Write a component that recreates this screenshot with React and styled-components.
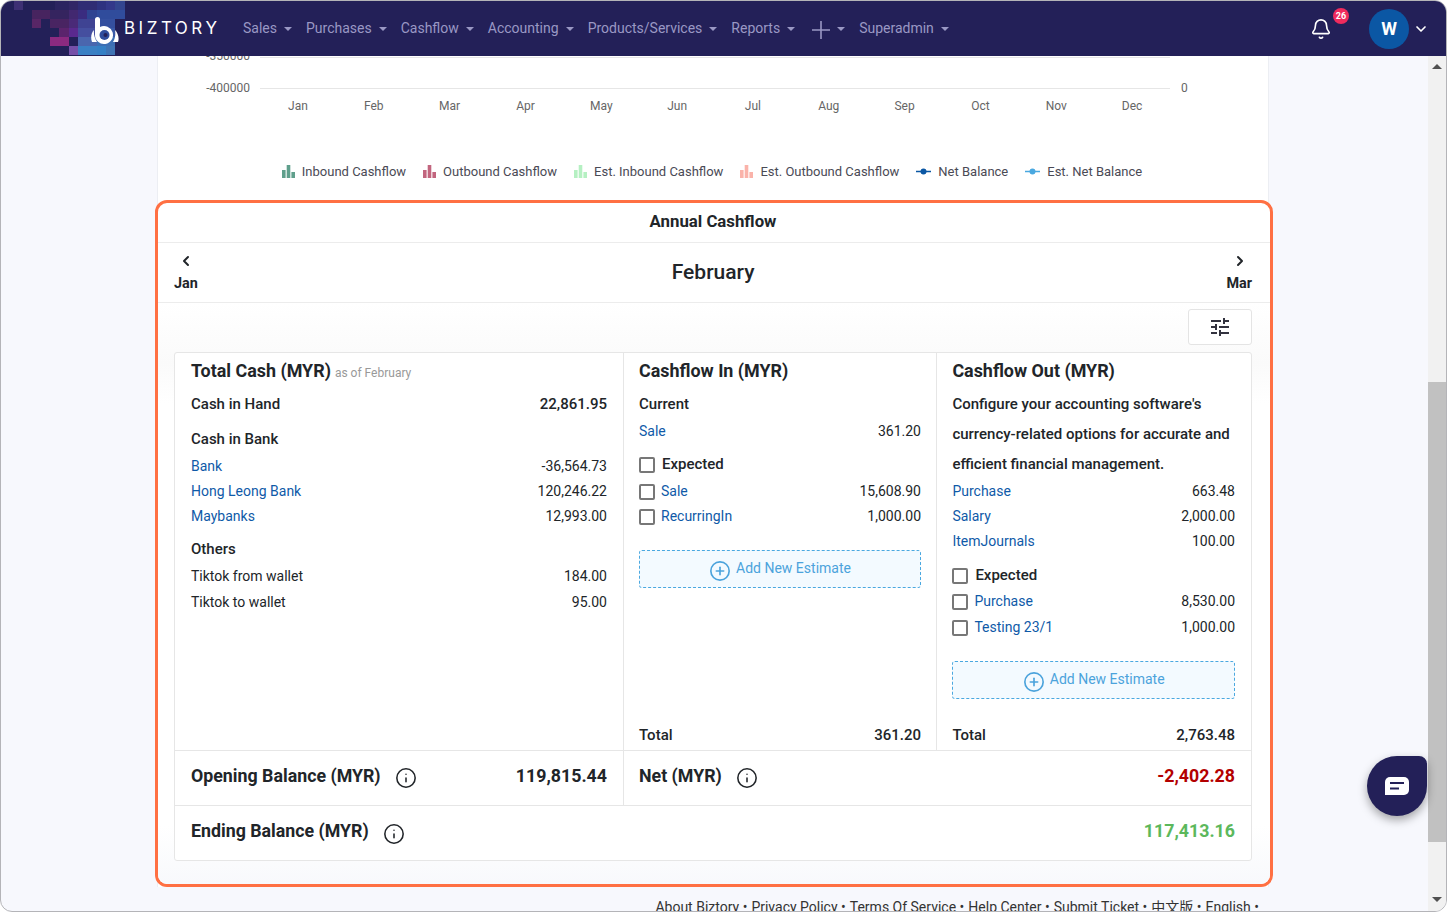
import styled, { createGlobalStyle } from 'styled-components';
import { Bell, ChevronDown, ChevronLeft, ChevronRight, CirclePlus, Info } from 'lucide-react';
import { MdTune } from 'react-icons/md';

const GlobalStyle = createGlobalStyle`
	html, body {
		margin: 0;
		height: 100%;
		overflow: hidden;
		background: #fff;
		font-family: 'Roboto', 'Noto Sans CJK SC', sans-serif;
		font-size: 14px;
		color: #212529;
	}
	* { box-sizing: border-box; }
`;

const NAV_ITEMS = ['Sales', 'Purchases', 'Cashflow', 'Accounting', 'Products/Services', 'Reports'];
const MONTHS = ['Jan', 'Feb', 'Mar', 'Apr', 'May', 'Jun', 'Jul', 'Aug', 'Sep', 'Oct', 'Nov', 'Dec'];
const FOOTER = ['About Biztory', 'Privacy Policy', 'Terms Of Service', 'Help Center', 'Submit Ticket', '中文版', 'English'];

// x, y, width, colour of the mosaic behind the logo
const MOSAIC = [
	[14, 1, 9, '#3e3074'], [55, 1, 14, '#2b2460'], [69, 1, 9, '#312766'], [78, 1, 19, '#2f2c74'], [97, 1, 9, '#2e3280'], [106, 1, 9, '#33388a'], [115, 1, 10, '#33458f'],
	[32, 10, 18, '#47245f'], [50, 10, 19, '#35245f'], [69, 10, 9, '#422870'], [78, 10, 9, '#3a2c80'], [87, 10, 10, '#2f4492'], [97, 10, 28, '#304c9c'],
	[32, 19, 9, '#582666'], [50, 19, 19, '#492462'], [69, 19, 9, '#4a2a78'], [78, 19, 19, '#3f4393'], [97, 19, 18, '#35509f'],
	[59, 28, 10, '#5b246c'], [69, 28, 9, '#5a298e'], [78, 28, 19, '#454f9f'], [97, 28, 18, '#3b5ba8'],
	[50, 37, 19, '#8c2a80'], [78, 37, 19, '#4a66ae'], [97, 37, 18, '#3d6fb4'],
	[69, 46, 9, '#7550a8'], [78, 46, 19, '#3a80c4'], [97, 46, 9, '#3580c5'], [106, 46, 9, '#3f74b4'],
];

const LEGEND = [
	{ label: 'Inbound Cashflow', type: 'bar', color: '#5f9f8c' },
	{ label: 'Outbound Cashflow', type: 'bar', color: '#c2657e' },
	{ label: 'Est. Inbound Cashflow', type: 'bar', color: '#b5f0c2' },
	{ label: 'Est. Outbound Cashflow', type: 'bar', color: '#fab3aa' },
	{ label: 'Net Balance', type: 'line', color: '#0b57a4' },
	{ label: 'Est. Net Balance', type: 'line', color: '#4aa8e0' },
];

const Frame = styled.div`
	position: relative;
	width: 1447px;
	height: 912px;
	border: 1px solid #b4b4b8;
	border-radius: 12px;
	overflow: hidden;
	display: flex;
	flex-direction: column;
	background: #f7f8fd;
`;

const Nav = styled.header`
	position: relative;
	flex: none;
	height: 55px;
	background: #232058;
	display: flex;
	align-items: center;
	padding-left: 90px;
`;

const Mosaic = styled.svg`
	position: absolute;
	left: -1px;
	top: -1px;
`;

const Logo = styled.div`
	position: relative;
	display: flex;
	align-items: center;
	width: 152px;
	color: #fff;
	font-family: 'Inter', sans-serif;
	font-size: 17px;
	letter-spacing: 3.5px;
`;

const LogoText = styled.span`
	margin-top: -2px;
`;

const Menu = styled.nav`
	display: flex;
	align-items: center;
	gap: 14px;
	padding-bottom: 1px;
`;

const MenuItem = styled.div`
	display: flex;
	align-items: center;
	gap: 7px;
	color: #9a98c4;
	font-size: 14px;
	margin-left: ${(p) => p.$ml || 0}px;
`;

const Caret = styled.span`
	width: 0;
	height: 0;
	border-left: 4px solid transparent;
	border-right: 4px solid transparent;
	border-top: 4px solid #9a98c4;
	margin-top: 2px;
`;

const NavRight = styled.div`
	margin-left: auto;
	display: flex;
	align-items: center;
	padding-right: 17px;
`;

const BellWrap = styled.div`
	position: relative;
	display: flex;
	margin-right: 37px;
`;

const Badge = styled.span`
	position: absolute;
	left: 23px;
	top: -10px;
	width: 16px;
	height: 16px;
	border-radius: 50%;
	background: #ef2b5d;
	color: #fff;
	font-size: 9px;
	font-weight: 700;
	display: flex;
	align-items: center;
	justify-content: center;
`;

const Avatar = styled.div`
	width: 40px;
	height: 40px;
	border-radius: 50%;
	background: #0b57a4;
	color: #fff;
	font-size: 18px;
	font-weight: 700;
	display: flex;
	align-items: center;
	justify-content: center;
	margin-right: 4px;
`;

const Viewport = styled.div`
	flex: 1;
	min-height: 0;
	display: flex;
`;

const Main = styled.main`
	flex: 1;
	min-width: 0;
	overflow: hidden;
`;

const Sheet = styled.div`
	width: 1112px;
	margin-left: 156px;
	background: #fff;
	border-left: 1px solid #eceef3;
	border-right: 1px solid #eceef3;
`;

const ChartSvg = styled.svg`
	display: block;
	font-family: 'Roboto', sans-serif;
	font-size: 12px;
	fill: #666;
`;

const Legend = styled.div`
	height: 59px;
	display: flex;
	align-items: center;
	justify-content: center;
	gap: 17px;
	padding: 2px 2px 0 0;
`;

const LegendItem = styled.div`
	display: flex;
	align-items: center;
	gap: 7px;
	font-size: 13px;
	color: #4a4a55;
`;

const Highlight = styled.section`
	margin: 0 -5px 0 -3px;
	border: 3px solid #ff7043;
	border-radius: 12px;
	background: #fff;
	overflow: hidden;
`;

const TitleBar = styled.h2`
	margin: 0;
	height: 40px;
	border-bottom: 1px solid #ececec;
	display: flex;
	align-items: center;
	justify-content: center;
	padding-bottom: 3px;
	padding-right: 2px;
	font-size: 16.8px;
	font-weight: 700;
`;

const MonthBar = styled.div`
	height: 60px;
	border-bottom: 1px solid #ececec;
	display: flex;
	align-items: center;
	justify-content: space-between;
	padding: 0 18px 0 16px;
`;

const MonthLink = styled.div`
	display: flex;
	flex-direction: column;
	align-items: center;
	font-size: 14.4px;
	font-weight: 700;
	line-height: 22px;
	gap: 4px;
	padding-top: 2px;

	svg {
		display: block;
		margin-left: ${(p) => (p.$next ? 2 : 0)}px;
	}
`;

const MonthName = styled.div`
	font-size: 21px;
	font-weight: 500;
	padding: 0 0 2px 2px;
`;

const Content = styled.div`
	padding: 6px 18px 23px 16px;
	background: linear-gradient(#fff, #fafafa 60px, #fff 100px, #fff 90%, #f8f9fc);
`;

const Toolbar = styled.div`
	display: flex;
	justify-content: flex-end;
	margin-bottom: 7px;
`;

const FilterButton = styled.button`
	width: 64px;
	height: 36px;
	padding: 0;
	border: 1px solid #e4e4e4;
	border-radius: 3px;
	background: #fff;
	color: #33333f;
	display: flex;
	align-items: center;
	justify-content: center;
`;

const Card = styled.div`
	background: #fff;
	border: 1px solid #e6e6e6;
	border-radius: 3px;
	height: 509px;
`;

const Columns = styled.div`
	display: grid;
	grid-template-columns: 449px 313px 1fr;
	height: 398px;
	border-bottom: 1px solid #e6e6e6;
`;

const Column = styled.div`
	display: flex;
	flex-direction: column;
	padding: ${(p) => p.$pad || '0 15px'};
	border-right: ${(p) => (p.$last ? 'none' : '1px solid #e6e6e6')};
`;

const ColumnTitle = styled.div`
	height: 38px;
	flex: none;
	display: flex;
	align-items: center;
	gap: 4px;
	padding-bottom: 3px;
	font-size: 17.9px;
	font-weight: 700;
`;

const AsOf = styled.span`
	font-size: 12px;
	font-weight: 400;
	color: #999;
	padding-top: 4px;
`;

const Row = styled.div`
	flex: none;
	height: ${(p) => p.$h || 25}px;
	margin-top: ${(p) => p.$mt || 0}px;
	padding-bottom: ${(p) => (p.$h ? 0 : 1)}px;
	display: flex;
	align-items: center;
	justify-content: space-between;
	font-size: ${(p) => (p.$strong ? 15 : 14)}px;
	font-weight: ${(p) => (p.$strong ? 500 : 400)};
`;

const RowLabel = styled.div`
	display: flex;
	align-items: center;
	gap: ${(p) => (p.$strong ? 7 : 6)}px;
`;

const RowLink = styled.span`
	color: #0f5aa8;
`;

const Checkbox = styled.span`
	width: 16px;
	height: 16px;
	border: 2px solid #777;
	border-radius: 2px;
	background: #fff;
	margin-top: 2px;
`;

const Intro = styled.p`
	margin: -2px 0 0;
	line-height: 30px;
	font-size: 15px;
	font-weight: 500;
`;

const AddEstimate = styled.button`
	flex: none;
	width: 100%;
	height: 38px;
	margin-top: 21px;
	border: 1px dashed #4aa8e0;
	border-radius: 3px;
	background: #f3faff;
	color: #4ba3dc;
	font-family: inherit;
	font-size: 14px;
	display: flex;
	align-items: center;
	justify-content: center;
	gap: 5px;
	padding: 0;

	svg { margin-top: 3px; }
	span { margin-top: -2px; }
`;

const TotalRow = styled(Row)`
	margin-top: auto;
	height: 26px;
	margin-bottom: 2px;
	padding-bottom: 0;
`;

const BalanceRow = styled.div`
	display: grid;
	grid-template-columns: 449px 1fr;
	height: 55px;
	border-bottom: 1px solid #e6e6e6;
`;

const EndingRow = styled.div`
	height: 54px;
	display: flex;
	align-items: center;
	justify-content: space-between;
	padding: 0 16px 5px;
	font-size: 17.8px;
	font-weight: 700;
`;

const BalanceCell = styled.div`
	display: flex;
	align-items: center;
	justify-content: space-between;
	padding: ${(p) => (p.$divider ? '0 16px 6px' : '0 16px 6px 15px')};
	font-size: 17.8px;
	font-weight: 700;
	border-right: ${(p) => (p.$divider ? '1px solid #e6e6e6' : 'none')};
`;

const BalanceLabel = styled.div`
	display: flex;
	align-items: center;
	gap: 14px;

	svg { margin-top: 6px; }
`;

const Amount = styled.span`
	color: ${(p) => p.$color || 'inherit'};
`;

const Footer = styled.footer`
	width: 1268px;
	display: flex;
	justify-content: flex-end;
	gap: 4px;
	padding: 12px 10px 0 0;
	font-size: 14px;
	line-height: 17px;
	color: #333;
	white-space: nowrap;
`;

const Scrollbar = styled.div`
	flex: none;
	width: 18px;
	background: #f1f1f1;
	display: flex;
	flex-direction: column;
	align-items: center;
`;

const ScrollArrow = styled.span`
	flex: none;
	width: 0;
	height: 0;
	border-left: 5px solid transparent;
	border-right: 5px solid transparent;
	margin-top: ${(p) => p.$mt}px;
	${(p) => (p.$down ? 'border-top: 5px solid #505050;' : 'border-bottom: 5px solid #505050;')}
`;

const ScrollThumb = styled.div`
	flex: none;
	width: 100%;
	height: 460px;
	margin-top: 313px;
	background: #c1c1c1;
`;

const ChatButton = styled.button`
	position: absolute;
	right: 19px;
	bottom: 95px;
	width: 60px;
	height: 60px;
	padding: 0;
	border: none;
	border-radius: 50% 8px 50% 50%;
	background: #232058;
	box-shadow: 0 4px 10px rgba(0, 0, 0, 0.35);
	display: flex;
	align-items: center;
	justify-content: center;
`;

const LogoMark = () => (
	<svg width="30" height="28" viewBox="0 0 30 28" style={{ marginRight: 3, marginTop: 5 }} aria-hidden>
		<path d="M4 2.500a2.500 2.500 0 0 1 5 0V10a9 9 0 1 1-5 8z" fill="#fff" />
		<circle cx="13.500" cy="18" r="5" fill="#2f4c9c" />
		<circle cx="14.500" cy="18" r="2" fill="#232058" />
		<path d="M3 13C0 16-.5 21 1 25h5C3.500 21 2.500 17 3 13zM24 13c3 3 4.500 8 3 12h-5c2.500-4 2.500-8 2-12z" fill="#fff" />
	</svg>
);

const PlusIcon = () => (
	<svg width="18" height="18" viewBox="0 0 18 18" style={{ marginTop: 3 }} aria-hidden>
		<path d="M9 0v18M0 9h18" stroke="#9a98c4" strokeWidth="1.6" />
	</svg>
);

const BarIcon = ({ color }) => (
	<svg width="13" height="13" viewBox="0 0 13 13" aria-hidden>
		<g fill={color}>
			<rect x="0" y="5" width="3.600" height="8" />
			<rect x="4.700" y="0" width="3.600" height="13" />
			<rect x="9.400" y="7" width="3.600" height="6" />
		</g>
	</svg>
);

const LineIcon = ({ color }) => (
	<svg width="15" height="13" viewBox="0 0 15 13" aria-hidden>
		<path d="M0 6.500h15" stroke={color} strokeWidth="1.500" />
		<circle cx="7.500" cy="6.500" r="3" fill={color} />
	</svg>
);

const MainChart = () => (
	<ChartSvg width="1110" height="85" viewBox="158 56 1110 85" role="img" aria-label="Cashflow chart">
		<path d="M260 57.500H1170M260 88.500H1170" stroke="#e6e6e6" strokeWidth="1" />
		<text x="250" y="60" textAnchor="end">-350000</text>
		<text x="250" y="92" textAnchor="end">-400000</text>
		<text x="1181" y="92">0</text>
		{MONTHS.map((m, i) => (
			<text key={m} x={298 + i * 75.82} y="110" textAnchor="middle">{m}</text>
		))}
	</ChartSvg>
);

const Expected = ({ label, value, ...rest }) => (
	<Row {...rest}>
		<RowLabel>
			<Checkbox />
			<RowLink>{label}</RowLink>
		</RowLabel>
		<span>{value}</span>
	</Row>
);

const LinkRow = ({ label, value, ...rest }) => (
	<Row {...rest}>
		<RowLink>{label}</RowLink>
		<span>{value}</span>
	</Row>
);

const ExpectedHead = ({ ...rest }) => (
	<Row $strong {...rest}>
		<RowLabel $strong>
			<Checkbox />
			Expected
		</RowLabel>
	</Row>
);

const AddButton = () => (
	<AddEstimate>
		<CirclePlus size={22} strokeWidth={1.8} />
		<span>Add New Estimate</span>
	</AddEstimate>
);

const InfoIcon = () => <Info size={22} strokeWidth={1.7} />;

export default function App() {
	return (
		<>
			<GlobalStyle />
			<Frame>
				<Nav>
					<Mosaic width="130" height="56" aria-hidden>
						{MOSAIC.map(([x, y, w, c]) => (
							<rect key={`${x}-${y}`} x={x} y={y} width={w} height="9" fill={c} />
						))}
					</Mosaic>
					<Logo>
						<LogoMark />
						<LogoText>BIZTORY</LogoText>
					</Logo>
					<Menu>
						{NAV_ITEMS.map((item) => (
							<MenuItem key={item}>
								{item}
								<Caret />
							</MenuItem>
						))}
						<MenuItem $ml={3}>
							<PlusIcon />
							<Caret />
						</MenuItem>
						<MenuItem>
							Superadmin
							<Caret />
						</MenuItem>
					</Menu>
					<NavRight>
						<BellWrap>
							<Bell size={22} color="#fff" strokeWidth={1.8} />
							<Badge>26</Badge>
						</BellWrap>
						<Avatar>W</Avatar>
						<ChevronDown size={16} color="#fff" strokeWidth={2.5} />
					</NavRight>
				</Nav>
				<Viewport>
					<Main>
						<Sheet>
							<MainChart />
							<Legend>
								{LEGEND.map((l) => (
									<LegendItem key={l.label}>
										{l.type === 'bar' ? <BarIcon color={l.color} /> : <LineIcon color={l.color} />}
										{l.label}
									</LegendItem>
								))}
							</Legend>
							<Highlight>
								<TitleBar>Annual Cashflow</TitleBar>
								<MonthBar>
									<MonthLink>
										<ChevronLeft size={16} strokeWidth={3} />
										Jan
									</MonthLink>
									<MonthName>February</MonthName>
									<MonthLink $next>
										<ChevronRight size={16} strokeWidth={3} />
										Mar
									</MonthLink>
								</MonthBar>
								<Content>
									<Toolbar>
										<FilterButton aria-label="Filter">
											<MdTune size={24} />
										</FilterButton>
									</Toolbar>
									<Card>
										<Columns>
											<Column $pad="0 16px">
												<ColumnTitle>
													Total Cash (MYR) <AsOf>as of February</AsOf>
												</ColumnTitle>
												<Row $h={26} $strong>
													<span>Cash in Hand</span>
													<span>22,861.95</span>
												</Row>
												<Row $h={26} $mt={9} $strong>Cash in Bank</Row>
												<LinkRow $h={26} $mt={1} label="Bank" value="-36,564.73" />
												<LinkRow label="Hong Leong Bank" value="120,246.22" />
												<LinkRow label="Maybanks" value="12,993.00" />
												<Row $h={26} $mt={7} $strong>Others</Row>
												<Row $h={26} $mt={1}>
													<span>Tiktok from wallet</span>
													<span>184.00</span>
												</Row>
												<Row $h={26}>
													<span>Tiktok to wallet</span>
													<span>95.00</span>
												</Row>
											</Column>
											<Column>
												<ColumnTitle>Cashflow In (MYR)</ColumnTitle>
												<Row $h={26} $strong>Current</Row>
												<LinkRow $h={26} $mt={1} label="Sale" value="361.20" />
												<ExpectedHead $h={26} $mt={7} />
												<Expected $h={26} $mt={1} label="Sale" value="15,608.90" />
												<Expected label="RecurringIn" value="1,000.00" />
												<AddButton />
												<TotalRow $strong>
													<span>Total</span>
													<span>361.20</span>
												</TotalRow>
											</Column>
											<Column $last $pad="0 16px 0 15.400px">
												<ColumnTitle>Cashflow Out (MYR)</ColumnTitle>
												<Intro>
													Configure your accounting software's currency-related options for accurate and efficient financial management.
												</Intro>
												<LinkRow label="Purchase" value="663.48" />
												<LinkRow label="Salary" value="2,000.00" />
												<LinkRow label="ItemJournals" value="100.00" />
												<ExpectedHead $h={26} $mt={8} />
												<Expected $h={26} label="Purchase" value="8,530.00" />
												<Expected $h={26} label="Testing 23/1" value="1,000.00" />
												<AddButton />
												<TotalRow $strong>
													<span>Total</span>
													<span>2,763.48</span>
												</TotalRow>
											</Column>
										</Columns>
										<BalanceRow>
											<BalanceCell $divider>
												<BalanceLabel>
													Opening Balance (MYR)
													<InfoIcon />
												</BalanceLabel>
												<Amount>119,815.44</Amount>
											</BalanceCell>
											<BalanceCell>
												<BalanceLabel>
													Net (MYR)
													<InfoIcon />
												</BalanceLabel>
												<Amount $color="#b30000">-2,402.28</Amount>
											</BalanceCell>
										</BalanceRow>
										<EndingRow>
											<BalanceLabel>
												Ending Balance (MYR)
												<InfoIcon />
											</BalanceLabel>
											<Amount $color="#5cb85c">117,413.16</Amount>
										</EndingRow>
									</Card>
								</Content>
							</Highlight>
						</Sheet>
						<Footer>
							{FOOTER.map((f) => (
								<span key={f}>{f} •</span>
							))}
						</Footer>
					</Main>
					<Scrollbar>
						<ScrollArrow $mt={8} />
						<ScrollThumb />
						<ScrollArrow $down $mt={55} />
					</Scrollbar>
				</Viewport>
				<ChatButton aria-label="Chat">
					<svg width="24" height="18" viewBox="0 0 24 18" aria-hidden>
						<path d="M5 0h14a5 5 0 0 1 5 5v8a5 5 0 0 1-5 5H0V5a5 5 0 0 1 5-5z" fill="#fff" />
						<path d="M5 6h14M5 11.500h9" stroke="#232058" strokeWidth="2" />
					</svg>
				</ChatButton>
			</Frame>
		</>
	);
}
